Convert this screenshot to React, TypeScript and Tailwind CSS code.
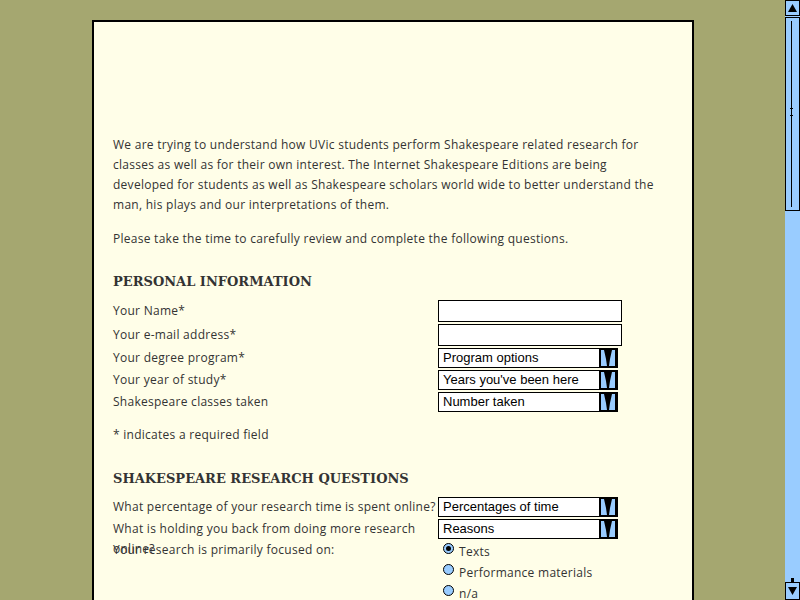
import React from "react";

const body = { fontFamily: '"Open Sans", "DejaVu Sans", sans-serif', letterSpacing: "0.27px" };
const ctl = { fontFamily: '"Liberation Sans", Arial, sans-serif', letterSpacing: "0px" };
const head = { fontFamily: '"DejaVu Serif", "Liberation Serif", serif', letterSpacing: "0px" };

function Arrow() {
  return (
    <svg width="18" height="20" viewBox="0 0 18 20" className="block">
      <rect x="0" y="0" width="18" height="20" fill="#000" />
      <rect x="2" y="2" width="14" height="16" fill="#99ccff" />
      <polygon points="5,2 13,2 11,11 10,18 8,18 7,11" fill="#000" />
    </svg>
  );
}

function Select({ label }: { label: string }) {
  return (
    <div className="flex h-[20px] w-[180px] items-center border border-black bg-white" style={ctl}>
      <span className="flex-1 pl-[4px] text-[13px] leading-[18px] text-black">{label}</span>
      <Arrow />
    </div>
  );
}

function TextInput() {
  return <div className="h-[22px] w-[184px] border border-black bg-white" />;
}

function Radio({ checked, label }: { checked?: boolean; label: string }) {
  return (
    <div className="flex h-[21px] items-start gap-[5px]">
      <div className="mt-[1px] flex h-[11px] w-[11px] items-center justify-center rounded-full border border-black bg-[#99ccff]">
        {checked && <div className="h-[5px] w-[5px] rounded-full bg-black" />}
      </div>
      <span className="text-[12px] leading-[20px] text-[#333]">{label}</span>
    </div>
  );
}

function Row({ label, h, children }: { label: string; h: string; children: React.ReactNode }) {
  return (
    <div className={`flex items-center ${h}`}>
      <div className="w-[325px] text-[12px] leading-[20px] text-[#333]">{label}</div>
      {children}
    </div>
  );
}

export default function App() {
  return (
    <div className="relative h-[600px] w-[800px] overflow-hidden bg-[#a5a770]" style={body}>
      <div className="absolute left-[92px] top-[20px] h-[600px] w-[602px] border-2 border-black bg-[#fffee8] pl-[19px] pt-[113px]">
        <p className="w-[550px] text-[12px] leading-[20px] text-[#333]">
          We are trying to understand how UVic students perform Shakespeare related research for classes as well as for their own interest. The Internet Shakespeare Editions are being developed for students as well as Shakespeare scholars world wide to better understand the man, his plays and our interpretations of them.
        </p>
        <p className="mt-[14px] text-[12px] leading-[20px] text-[#333]">
          Please take the time to carefully review and complete the following questions.
        </p>
        <h2 className="mt-[23px] text-[13px] font-bold leading-[20px] text-[#333]" style={head}>
          PERSONAL INFORMATION
        </h2>
        <div className="mt-[7px]">
          <Row label="Your Name*" h="h-[24px]"><TextInput /></Row>
          <Row label="Your e-mail address*" h="h-[24px]"><TextInput /></Row>
          <Row label="Your degree program*" h="h-[22px]"><Select label="Program options" /></Row>
          <Row label="Your year of study*" h="h-[22px]"><Select label="Years you've been here" /></Row>
          <Row label="Shakespeare classes taken" h="h-[22px]"><Select label="Number taken" /></Row>
        </div>
        <p className="mt-[12px] text-[12px] leading-[20px] text-[#333]">* indicates a required field</p>
        <h2 className="mt-[24px] text-[13px] font-bold leading-[20px] text-[#333]" style={head}>
          SHAKESPEARE RESEARCH QUESTIONS
        </h2>
        <div className="mt-[7px]">
          <Row label="What percentage of your research time is spent online?" h="h-[22px]">
            <Select label="Percentages of time" />
          </Row>
          <div className="flex h-[22px] items-start">
            <div className="mt-[1px] w-[325px] text-[12px] leading-[20px] text-[#333]">
              What is holding you back from doing more research online?
            </div>
            <div className="mt-[1px]"><Select label="Reasons" /></div>
          </div>
          <div className="flex items-start">
            <div className="w-[330px] text-[12px] leading-[20px] text-[#333]">Your research is primarily focused on:</div>
            <div className="pt-[2px]">
              <Radio checked label="Texts" />
              <Radio label="Performance materials" />
              <Radio label="n/a" />
            </div>
          </div>
        </div>
      </div>
      {/* scrollbar */}
      <div className="absolute right-0 top-0 flex h-[600px] w-[15px] flex-col bg-[#99ccff]">
        <div className="flex h-[16px] items-center justify-center border border-black bg-[#99ccff]">
          <svg width="9" height="8" viewBox="0 0 9 8"><polygon points="4.5,0 9,8 0,8" fill="#000" /></svg>
        </div>
        <div className="relative mt-[1px] h-[194px] border border-black bg-[#99ccff]">
          <div className="absolute left-[5px] top-[3px] h-[186px] w-[1px] bg-black" />
          <div className="absolute left-[4px] top-[90px] h-[1px] w-[3px] bg-black" />
          <div className="absolute left-[4px] top-[97px] h-[1px] w-[3px] bg-black" />
        </div>
        <div className="flex-1" />
        <div className="mx-auto h-[4px] w-[3px] bg-black" />
        <div className="flex h-[18px] items-center justify-center border border-black bg-[#99ccff]">
          <svg width="9" height="8" viewBox="0 0 9 8"><polygon points="0,0 9,0 4.5,8" fill="#000" /></svg>
        </div>
      </div>
    </div>
  );
}
